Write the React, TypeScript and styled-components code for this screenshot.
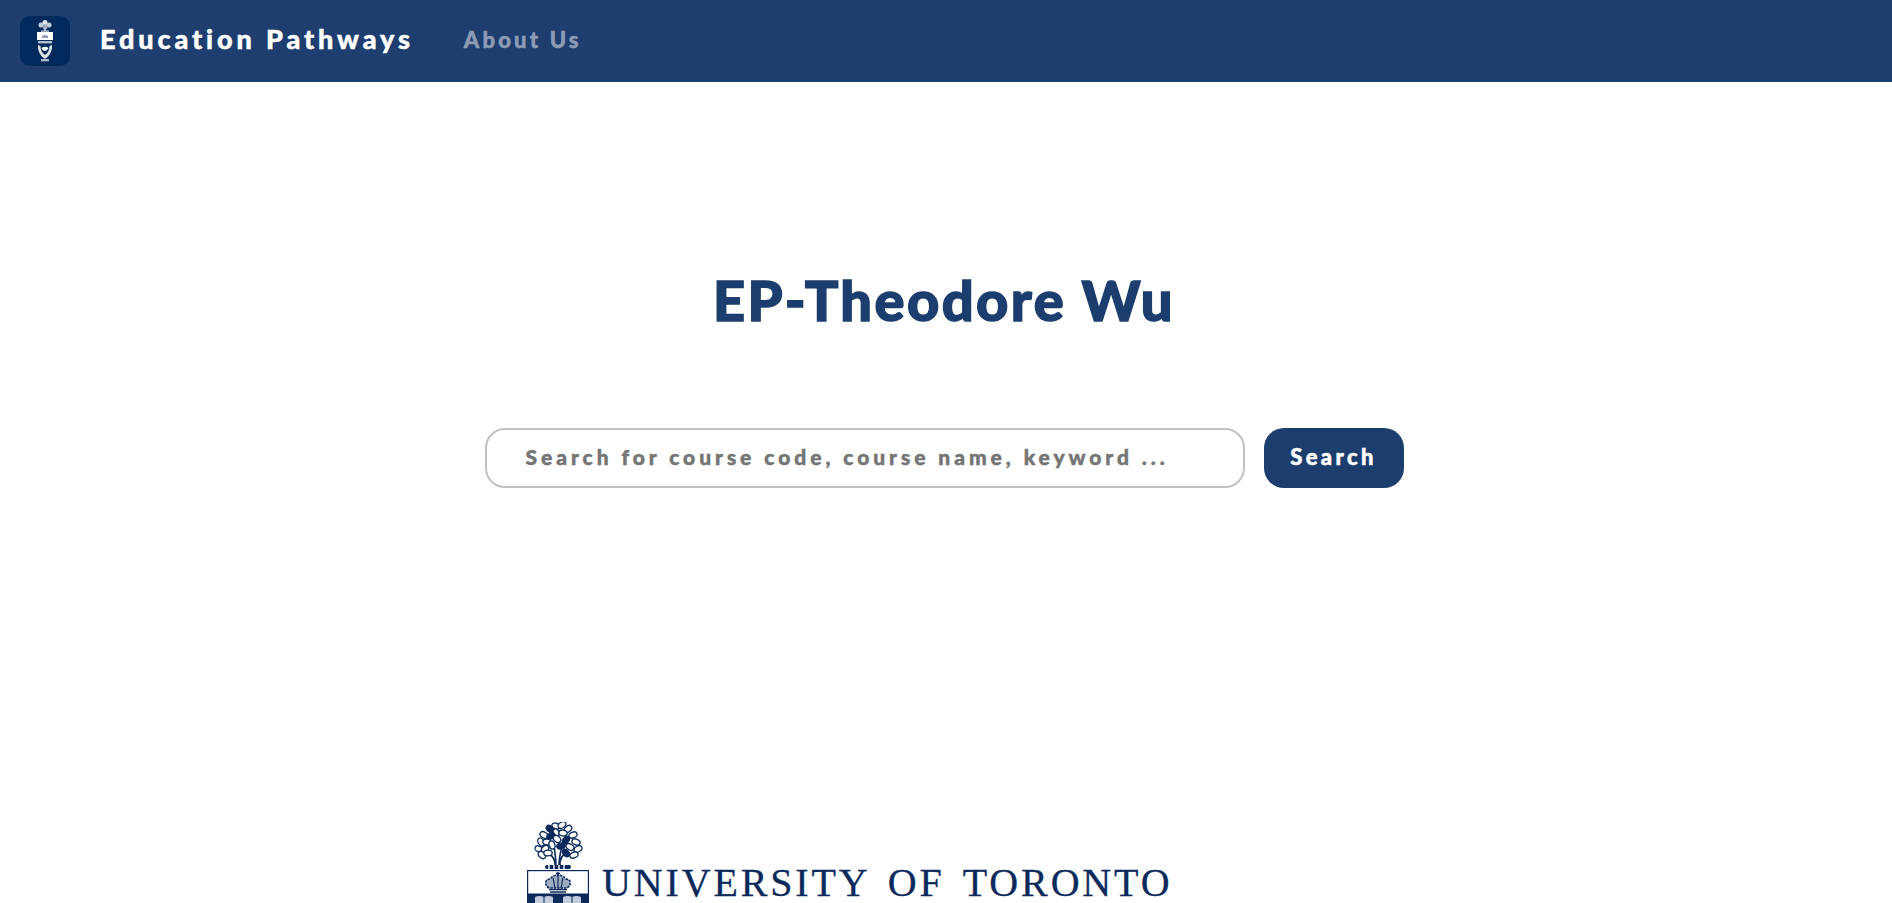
import React from "react";
import styled, { createGlobalStyle } from "styled-components";

const GlobalStyle = createGlobalStyle`
  html, body {
    margin: 0;
    height: 100%;
    overflow: hidden;
    background: #fff;
  }
  #root {
    height: 100%;
  }
`;

const Page = styled.div`
  height: 903px;
  overflow: hidden;
  font-family: "Lato", "Noto Sans", sans-serif;
  -webkit-text-stroke: 0.5px currentColor;
`;

const Navbar = styled.header`
  height: 82px;
  background: #1d3e6e;
  display: flex;
  align-items: center;
  padding-left: 20px;
`;

const LogoTile = styled.div`
  width: 50px;
  height: 50px;
  border-radius: 10px;
  background: #002a5c;
  display: flex;
  align-items: center;
  justify-content: center;
`;

const Brand = styled.a`
  margin-left: 30px;
  margin-bottom: 6px;
  color: #fff;
  font-size: 27px;
  font-weight: 900;
  letter-spacing: 3.9px;
`;

const NavLink = styled.a`
  margin-left: 50px;
  margin-bottom: 4px;
  color: #8d9cb5;
  font-size: 22px;
  font-weight: 900;
  letter-spacing: 3.2px;
`;

const Main = styled.main`
  display: flex;
  flex-direction: column;
  align-items: center;
  padding-top: 186px;
  padding-right: 4px;
`;

const Title = styled.h1`
  margin: 0;
  color: #1c3e6e;
  font-size: 56px;
  line-height: 64px;
  font-weight: 900;
  letter-spacing: 2.4px;
  -webkit-text-stroke: 1.4px currentColor;
`;

const SearchRow = styled.form`
  display: flex;
  gap: 19px;
  margin-top: 96px;
`;

const SearchBox = styled.div`
  width: 760px;
  height: 60px;
  box-sizing: border-box;
  border: 2px solid #c1c1c1;
  border-radius: 20px;
  padding: 0 0 3px 39px;
  display: flex;
  align-items: center;
  color: #757575;
  font-size: 21px;
  font-weight: 900;
  letter-spacing: 3.95px;
`;

const SearchButton = styled.button`
  width: 140px;
  height: 60px;
  border: none;
  border-radius: 20px;
  background: #1c3e6e;
  color: #fff;
  font-family: inherit;
  font-size: 22px;
  font-weight: 900;
  letter-spacing: 3.4px;
  padding: 0 0 3px;
`;

const Footer = styled.footer`
  display: flex;
  align-items: flex-start;
  margin-top: 334px;
  padding-left: 527px;
`;

const Wordmark = styled.span`
  margin: 46px 0 0 13px;
  color: #0b2a5b;
  font-family: "Liberation Serif", "Times New Roman", serif;
  font-size: 40px;
  line-height: 30px;
  letter-spacing: 2.85px;
  word-spacing: 6px;
  white-space: nowrap;
  -webkit-text-stroke: 0.3px currentColor;
`;

const leaves: [number, number, number][] = [
  [27, 4, 20], [33, 3, -30], [21, 7, 40], [39, 7, -40], [27, 11, 80], [34, 11, 10],
  [15, 13, 30], [22, 14, -20], [44, 13, -20], [12, 20, 60], [18, 20, 10], [28, 17, 40],
  [37, 18, -50], [47, 20, 20], [10, 27, 20], [16, 27, -40], [23, 23, 70], [32, 24, -10],
  [41, 25, 30], [49, 27, -30], [13, 33, 40], [19, 31, 0], [37, 31, 50], [45, 33, -20],
];

const Tree = ({ color, paper }: { color: string; paper: string }) => (
  <g>
    <path d="M26 44c1-6-2-10-8-14M31 44c-1-6 2-11 8-15M27 44c0-8-1-12-2-20M30 44c0-8 1-12 3-20" stroke={color} strokeWidth="1.6" fill="none" />
    {leaves.map(([x, y, r], i) => (
      <ellipse key={i} cx={x} cy={y} rx="4.2" ry="2.9" transform={`rotate(${r} ${x} ${y})`} fill={i % 5 === 2 ? color : paper} stroke={color} strokeWidth="1.3" />
    ))}
    <rect x="16" y="43" width="26" height="4" rx="2" fill={color} />
    <path d="M20 43v4M25 43v4M30 43v4M35 43v4" stroke={paper} strokeWidth="1.4" />
  </g>
);

const Crown = ({ color }: { color: string }) => (
  <g fill="none" stroke={color}>
    <path d="M19 66c-5-3-4-9 1-9 2-3 6-4 8-4s6 1 8 4c5 0 6 6 1 9z" fill="#9fadc2" strokeWidth="1.6" strokeDasharray="2.4 1" />
    <path d="M23 56c1 3 1 7 2 10M33 56c-1 3-1 7-2 10M28 54v12" strokeWidth="1.2" />
    <path d="M28 50v4M26 51.5h4" strokeWidth="1.4" />
    <path d="M19 67.5h18M20 70h16" strokeWidth="1.5" />
  </g>
);

const UofTCrest = () => (
  <svg width="62" height="81" viewBox="0 0 62 81">
    <g transform="translate(2 0)">
      <Tree color="#0b2a5b" paper="#fff" />
    </g>
    <rect x="0.6" y="48.6" width="60.8" height="32" fill="#fff" stroke="#0b2a5b" strokeWidth="1.2" />
    <g transform="translate(3 0)">
      <Crown color="#0b2a5b" />
    </g>
    <rect x="0" y="71.5" width="62" height="9.5" fill="#0b2a5b" />
    <path d="M8 75c3-1.4 6-1.4 9 0 3-1.4 6-1.4 9 0v6H8zM36 75c3-1.4 6-1.4 9 0 3-1.4 6-1.4 9 0v6H36z" fill="#c3ccda" />
    <path d="M17 75v6M45 75v6" stroke="#0b2a5b" strokeWidth="1" />
  </svg>
);

const SmallCrest = () => (
  <svg width="18" height="42" viewBox="0 0 18 42">
    <circle cx="5" cy="5" r="2.5" fill="#c6ced9" />
    <circle cx="13" cy="5" r="2.5" fill="#c6ced9" />
    <circle cx="9" cy="2.6" r="2.5" fill="#e4e8ee" />
    <circle cx="9" cy="7" r="2.5" fill="#9aa8bd" />
    <path d="M9 8v3" stroke="#d5dbe4" strokeWidth="1.4" />
    <rect x="5" y="10.5" width="8" height="1.2" fill="#d5dbe4" />
    <rect x="1" y="12" width="16" height="8" fill="#fff" />
    <path d="M6 18v-3l1.5 1L9 14.5l1.5 1.5 1.5-1v3z" fill="#8e9db5" />
    <rect x="2" y="21" width="14" height="2.4" fill="#b4bfce" />
    <path d="M2 25c-.6 5 2 11 7 14 5-3 7.600-9 7-14l-2.500 1c0 4-1.500 7-4.500 9-3-2-4.500-5-4.500-9z" fill="#dfe4eb" />
    <path d="M5.500 28c2-1.600 5-1.600 7 0-1 2-2.500 3-3.500 3-2 0-2.500-1-3.500-3z" fill="#fff" />
    <rect x="5" y="39" width="8" height="2.4" fill="#aab6c8" />
  </svg>
);

export default function App() {
  return (
    <Page>
      <GlobalStyle />
      <Navbar>
        <LogoTile>
          <SmallCrest />
        </LogoTile>
        <Brand>Education Pathways</Brand>
        <NavLink>About Us</NavLink>
      </Navbar>
      <Main>
        <Title>EP-Theodore Wu</Title>
        <SearchRow>
          <SearchBox>Search for course code, course name, keyword ...</SearchBox>
          <SearchButton type="button">Search</SearchButton>
        </SearchRow>
      </Main>
      <Footer>
        <UofTCrest />
        <Wordmark>UNIVERSITY OF TORONTO</Wordmark>
      </Footer>
    </Page>
  );
}
